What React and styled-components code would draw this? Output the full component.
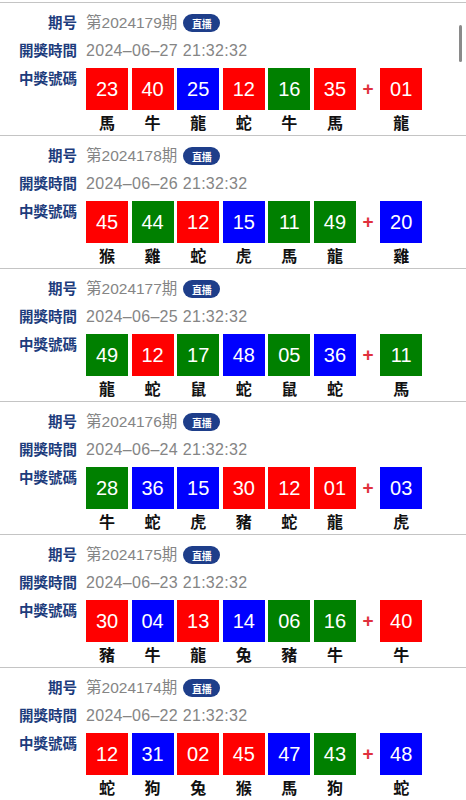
import React from 'react';
import styled, { createGlobalStyle } from 'styled-components';

const GlobalStyle = createGlobalStyle`
  html, body {
    margin: 0;
    padding: 0;
    background: #fff;
    overflow: hidden;
  }
  body {
    font-family: "Liberation Sans", "Noto Sans CJK TC", sans-serif;
  }
`;

const COLORS = {
  r: '#ff0000',
  b: '#0000ff',
  g: '#008000',
};

const draws = [
  {
    no: '2024179',
    date: '2024–06–27 21:32:32',
    balls: [['23', 'r', '馬'], ['40', 'r', '牛'], ['25', 'b', '龍'], ['12', 'r', '蛇'], ['16', 'g', '牛'], ['35', 'r', '馬']],
    special: ['01', 'r', '龍'],
  },
  {
    no: '2024178',
    date: '2024–06–26 21:32:32',
    balls: [['45', 'r', '猴'], ['44', 'g', '雞'], ['12', 'r', '蛇'], ['15', 'b', '虎'], ['11', 'g', '馬'], ['49', 'g', '龍']],
    special: ['20', 'b', '雞'],
  },
  {
    no: '2024177',
    date: '2024–06–25 21:32:32',
    balls: [['49', 'g', '龍'], ['12', 'r', '蛇'], ['17', 'g', '鼠'], ['48', 'b', '蛇'], ['05', 'g', '鼠'], ['36', 'b', '蛇']],
    special: ['11', 'g', '馬'],
  },
  {
    no: '2024176',
    date: '2024–06–24 21:32:32',
    balls: [['28', 'g', '牛'], ['36', 'b', '蛇'], ['15', 'b', '虎'], ['30', 'r', '豬'], ['12', 'r', '蛇'], ['01', 'r', '龍']],
    special: ['03', 'b', '虎'],
  },
  {
    no: '2024175',
    date: '2024–06–23 21:32:32',
    balls: [['30', 'r', '豬'], ['04', 'b', '牛'], ['13', 'r', '龍'], ['14', 'b', '兔'], ['06', 'g', '豬'], ['16', 'g', '牛']],
    special: ['40', 'r', '牛'],
  },
  {
    no: '2024174',
    date: '2024–06–22 21:32:32',
    balls: [['12', 'r', '蛇'], ['31', 'b', '狗'], ['02', 'r', '兔'], ['45', 'r', '猴'], ['47', 'b', '馬'], ['43', 'g', '狗']],
    special: ['48', 'b', '蛇'],
  },
];

const Page = styled.div`
  position: relative;
  width: 466px;
  height: 800px;
  padding-top: 2px;
  box-sizing: border-box;
  overflow: hidden;
`;

const ScrollThumb = styled.div`
  position: absolute;
  top: 25px;
  right: 4px;
  width: 3px;
  height: 37px;
  border-radius: 2px;
  background: #8a8a8a;
`;

const Entry = styled.div`
  height: 133px;
  box-sizing: border-box;
  border-top: 1px solid #c4c4c4;
  padding-top: 11px;
`;

const Row = styled.div`
  display: flex;
  align-items: ${p => (p.$top ? 'flex-start' : 'center')};
  height: ${p => (p.$top ? 'auto' : '18px')};
  margin-bottom: ${p => p.$mb || 0}px;
`;

const Label = styled.div`
  width: 77px;
  flex: none;
  margin-right: 9px;
  text-align: right;
  font-size: 14.5px;
  font-weight: bold;
  line-height: 18px;
  color: #1d3c7c;
  margin-top: ${p => p.$mt || 0}px;
`;

const Value = styled.div`
  font-size: ${p => (p.$date ? 16 : 15.5)}px;
  letter-spacing: ${p => (p.$date ? 0.3 : 0)}px;
  line-height: 18px;
  color: #858585;
`;

const Badge = styled.span`
  display: inline-flex;
  align-items: center;
  justify-content: center;
  width: 37px;
  height: 18px;
  margin-left: 6px;
  border-radius: 9px;
  background: #1e3e8a;
  color: #fff;
  font-size: 10px;
  font-weight: bold;
`;

const Balls = styled.div`
  display: flex;
  align-items: flex-start;
  gap: 3.6px;
`;

const Ball = styled.div`
  width: 42px;
  display: flex;
  flex-direction: column;
  align-items: center;
`;

const Num = styled.div`
  width: 42px;
  height: 42px;
  display: flex;
  align-items: center;
  justify-content: center;
  background: ${p => COLORS[p.$color]};
  color: #fff;
  font-size: 20px;
`;

const Zodiac = styled.div`
  margin-top: 4px;
  font-size: 16px;
  line-height: 20px;
  font-weight: bold;
  color: #111;
`;

const Plus = styled.div`
  width: 17px;
  height: 42px;
  display: flex;
  align-items: center;
  justify-content: center;
  color: #e0303c;
  font-size: 19px;
  font-weight: bold;
`;

const BallItem = ({ data }) => (
  <Ball>
    <Num $color={data[1]}>{data[0]}</Num>
    <Zodiac>{data[2]}</Zodiac>
  </Ball>
);

const DrawEntry = ({ draw }) => (
  <Entry>
    <Row $mb={10}>
      <Label>期号</Label>
      <Value>第{draw.no}期</Value>
      <Badge>直播</Badge>
    </Row>
    <Row $mb={8}>
      <Label>開獎時間</Label>
      <Value $date>{draw.date}</Value>
    </Row>
    <Row $top>
      <Label $mt={2}>中獎號碼</Label>
      <Balls>
        {draw.balls.map((b, i) => (
          <BallItem key={i} data={b} />
        ))}
        <Plus>+</Plus>
        <BallItem data={draw.special} />
      </Balls>
    </Row>
  </Entry>
);

export default function App() {
  return (
    <Page>
      <GlobalStyle />
      {draws.map(d => (
        <DrawEntry key={d.no} draw={d} />
      ))}
      <ScrollThumb />
    </Page>
  );
}
